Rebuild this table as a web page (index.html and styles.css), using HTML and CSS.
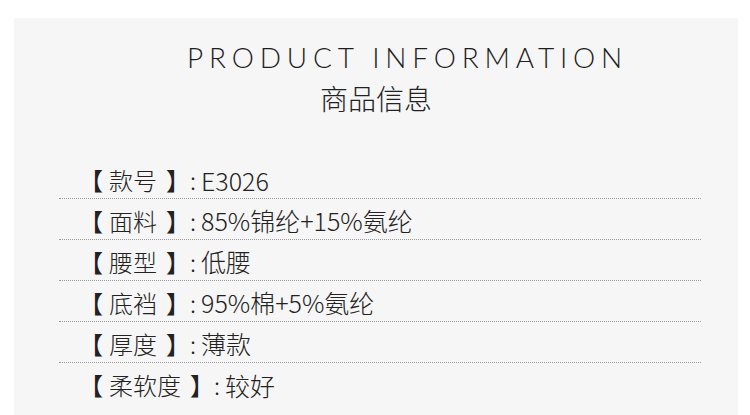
FILE: index.html
```html
<!DOCTYPE html>
<html lang="zh-CN">
<head>
<meta charset="utf-8">
<link rel="stylesheet" href="styles.css">
</head>
<body>
<div class="panel">
  <div class="head">
    <div class="en">PRODUCT INFORMATION</div>
    <div class="zh">商品信息</div>
  </div>
  <div class="list">
    <div class="row"><span class="lb">【</span><span class="k">款号</span><span class="rb">】</span><span class="c">:</span><span class="v">E3026</span></div>
    <div class="row"><span class="lb">【</span><span class="k">面料</span><span class="rb">】</span><span class="c">:</span><span class="v">85%锦纶+15%氨纶</span></div>
    <div class="row"><span class="lb">【</span><span class="k">腰型</span><span class="rb">】</span><span class="c">:</span><span class="v">低腰</span></div>
    <div class="row"><span class="lb">【</span><span class="k">底裆</span><span class="rb">】</span><span class="c">:</span><span class="v">95%棉+5%氨纶</span></div>
    <div class="row"><span class="lb">【</span><span class="k">厚度</span><span class="rb">】</span><span class="c">:</span><span class="v">薄款</span></div>
    <div class="row last"><span class="lb">【</span><span class="k">柔软度</span><span class="rb">】</span><span class="c">:</span><span class="v">较好</span></div>
  </div>
</div>
</body>
</html>
```
FILE: styles.css
```css
html, body {
  margin: 0;
  padding: 0;
  background: #ffffff;
  height: 100%;
}
body {
  padding: 18px 12px 0 14px;
  box-sizing: border-box;
  overflow: hidden;
}
.panel {
  background: #f6f6f6;
  height: 100%;
  font-family: "Noto Sans CJK SC", "Noto Sans", sans-serif;
  color: #222222;
}
.head {
  padding-top: 22px;
  text-align: center;
}
.en {
  font-family: Lato, "Noto Sans", sans-serif;
  font-weight: 300;
  font-size: 28px;
  line-height: 34px;
  letter-spacing: 5.8px;
  padding-left: 63px;
  color: #1e1e1e;
}
.zh {
  font-size: 28px;
  font-weight: 300;
  line-height: 38px;
  margin-top: 5px;
}
.list {
  margin: 42px 37px 0 45px;
}
.row {
  display: flex;
  align-items: center;
  height: 40px;
  padding-top: 2px;
  box-sizing: border-box;
  border-bottom: 1px dotted #9a9a9a;
  font-size: 24px;
  font-weight: 300;
  padding-left: 20px;
  white-space: pre;
}
.row + .row {
  height: 41px;
}
.row.last {
  border-bottom: none;
}
.lb, .rb {
  font-family: "Noto Sans CJK TC", "Noto Sans CJK SC", sans-serif;
  font-weight: 400;
}
.lb {
  margin-right: 6px;
}
.rb {
  margin-left: 9px;
}
.c {
  margin-left: 0;
}
.v {
  margin-left: 5px;
  font-size: 25px;
}
```
